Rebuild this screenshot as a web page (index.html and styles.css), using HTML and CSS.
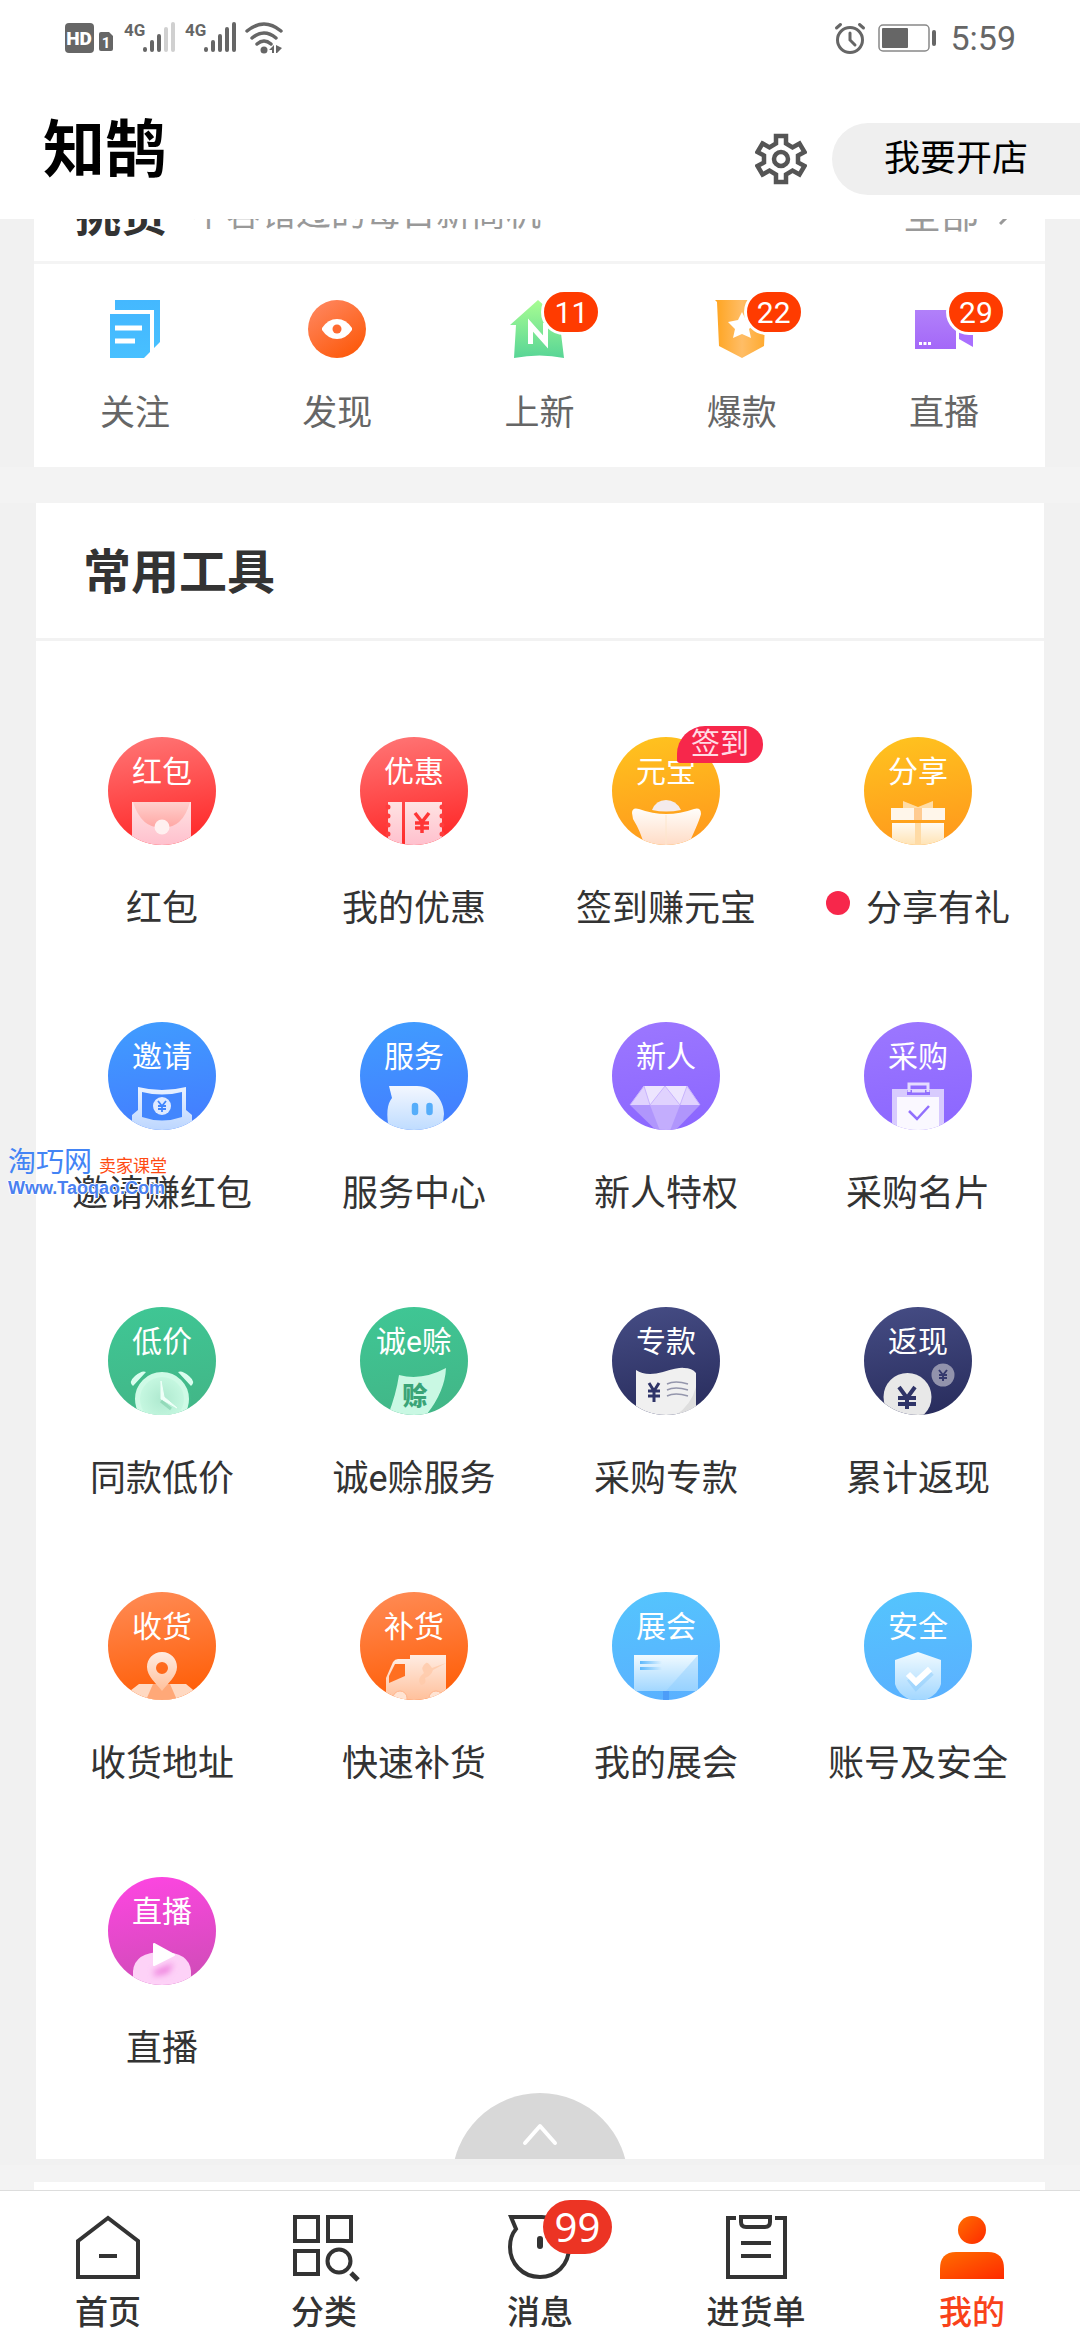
FILE: index.html
```html
<!DOCTYPE html>
<html lang="zh-CN">
<head>
<meta charset="utf-8">
<meta name="viewport" content="width=device-width, initial-scale=1">
<title>知鹄</title>
<link rel="stylesheet" href="styles.css">
</head>
<body>
<div class="page">
  <header class="top">
    <div class="status">
      <svg class="status-left" viewBox="0 0 222 34" width="222" height="34" aria-hidden="true">
        <rect x="1" y="2" width="29" height="30" rx="4" fill="#666"/>
        <text x="15" y="24" font-size="19" font-weight="900" fill="#fff" text-anchor="middle">HD</text>
        <path d="M37 11h8l4 4v13q0 2-2 2H37q-2 0-2-2V13q0-2 2-2z" fill="#666"/>
        <text x="42" y="27" font-size="15" font-weight="700" fill="#fff" text-anchor="middle">1</text>
        <g fill="#666">
          <text x="60" y="15" font-size="17" font-weight="700">4G</text>
          <text x="121" y="15" font-size="17" font-weight="700">4G</text>
        </g>
        <g stroke="#666" stroke-width="4" stroke-linecap="round">
          <path d="M81 28v1M88 21v8M95 15v14M142 28v1M149 21v8M156 15v14M163 8v21M170 3v26"/>
          <path d="M102 8v21M109 3v26" stroke="#d0d0d0"/>
        </g>
        <g fill="none" stroke="#666" stroke-width="3.500" stroke-linecap="round">
          <path d="M183 10q17-14 34 0M188 17q12-10 24 0M193 23q7-6 14 0"/>
        </g>
        <circle cx="200" cy="29" r="3.500" fill="#666"/>
        <path d="M205 29l5-5v8h-2v-3zM212 24v8h1l5-5z" fill="#666"/>
      </svg>
      <div class="status-right">
        <svg viewBox="0 0 32 32" width="32" height="32" fill="none" stroke="#666" stroke-linecap="round" aria-hidden="true">
          <circle cx="16" cy="18" r="12.500" stroke-width="3"/>
          <path d="M16 11v7l5 5" stroke-width="3"/><path d="M2.500 6L6.500 2.500M25.500 2.500l4 3.500" stroke-width="3"/>
        </svg>
        <svg viewBox="0 0 60 30" width="60" height="30" aria-hidden="true">
          <rect x="1" y="2" width="50" height="26" rx="4" fill="none" stroke="#888" stroke-width="1.500"/>
          <rect x="4" y="5" width="26" height="20" rx="1" fill="#666"/>
          <rect x="54" y="7" width="4" height="16" rx="2" fill="#666"/>
        </svg>
        <time class="clock">5:59</time>
      </div>
    </div>
    <div class="titlebar">
      <h1>知鹄</h1>
      <div class="actions">
        <button class="gear" type="button" aria-label="设置">
          <svg viewBox="0 0 52 52" width="52" height="52" fill="none" stroke="#555" stroke-width="4.500">
            <path d="M21 3H31V10.500L37.500 14.500L44.500 10.500L49.500 19L43 22.500V29.500L49.500 33L44.500 41.500L37.500 37.500L31 41.500V49H21V41.500L14.500 37.500L7.500 41.500L2.500 33L9 29.500V22.500L2.500 19L7.500 10.500L14.500 14.500L21 10.500Z"/>
            <circle cx="26" cy="26" r="7"/>
          </svg>
        </button>
        <button class="open-shop" type="button">我要开店</button>
      </div>
    </div>
  </header>

  <main class="content">
    <div class="band">
      <section class="card picks">
        <div class="picks-head">
          <h2>挑货</h2>
          <p>不容错过的每日新商机</p>
          <a href="#all">全部<svg viewBox="0 0 12 24" width="12" height="24" fill="none" stroke="#999" stroke-width="3"><path d="M1 3l9 9-9 9"/></svg></a>
        </div>
        <nav class="picks-grid">
          <a href="#follow">
            <span class="pick-icon"><svg viewBox="0 0 58 58" width="58" height="58">
              <defs><linearGradient id="gBlue" x1="0" y1="0" x2="0" y2="1"><stop offset="0" stop-color="#44b8ff"/><stop offset="1" stop-color="#48c0ff"/></linearGradient></defs>
              <path d="M9 0H54V42L48 48V10H9Z" fill="url(#gBlue)"/><path d="M4 14H44V52L38 58H4Z" fill="url(#gBlue)"/>
              <path d="M9 28H36M9 41H29" stroke="#fff" stroke-width="5"/></svg></span>
            <span>关注</span>
          </a>
          <a href="#discover">
            <span class="pick-icon"><svg viewBox="0 0 58 58" width="58" height="58">
              <defs><linearGradient id="gCoral" x1="0" y1="0" x2=".7" y2="1"><stop offset="0" stop-color="#ff8a66"/><stop offset="1" stop-color="#fd5a0c"/></linearGradient></defs>
              <circle cx="29" cy="29" r="29" fill="url(#gCoral)"/>
              <path d="M14 28Q20 19 29 19T44 28V30Q38 39 29 39T14 30Z" fill="#fff"/><circle cx="29" cy="29" r="4.500" fill="#ff6a30"/></svg></span>
            <span>发现</span>
          </a>
          <a href="#new">
            <span class="pick-icon"><svg viewBox="0 0 58 58" width="58" height="58">
              <defs><linearGradient id="gGreen" x1="0" y1="0" x2="0" y2="1"><stop offset="0" stop-color="#a8fd92"/><stop offset="1" stop-color="#58d596"/></linearGradient></defs>
              <path d="M28 0L56 25H50L54 58Q30 53 4 58L6 25H0Z" fill="url(#gGreen)"/>
              <path d="M20.500 44V25L35.500 42V23" stroke="#fff" stroke-width="5" fill="none"/></svg><b class="badge">11</b></span>
            <span>上新</span>
          </a>
          <a href="#hot">
            <span class="pick-icon"><svg viewBox="0 0 58 58" width="58" height="58">
              <defs><linearGradient id="gAmber" x1="0" y1="0" x2="1" y2="0"><stop offset="0" stop-color="#ffa41f"/><stop offset=".5" stop-color="#ffbd66"/><stop offset="1" stop-color="#ffa726"/></linearGradient></defs>
              <path d="M2 0H56L53 3L51 46L29 58L6 46L4 2Z" fill="url(#gAmber)"/>
              <path d="M29 12L33 20L43 22L36 29L38 38L29 34L20 38L22 29L15 22L25 20Z" fill="#fff"/></svg><b class="badge">22</b></span>
            <span>爆款</span>
          </a>
          <a href="#live">
            <span class="pick-icon"><svg viewBox="0 0 58 58" width="58" height="58">
              <defs><linearGradient id="gViolet" x1="0" y1="0" x2="0" y2="1"><stop offset="0" stop-color="#b180fa"/><stop offset="1" stop-color="#a468f8"/></linearGradient></defs>
              <path d="M0 10H41V49H0Z" fill="url(#gViolet)"/><path d="M44 20L58 12V47L44 39Z" fill="#a96fff"/>
              <path d="M4 43.500H16" stroke="#fff" stroke-width="3" stroke-dasharray="3 1.500"/></svg><b class="badge">29</b></span>
            <span>直播</span>
          </a>
        </nav>
      </section>
    </div>

    <section class="card tools">
      <h2 class="tools-head">常用工具</h2>
      <div class="tools-grid">
        <a class="tool" href="#hongbao"><span class="disc-wrap"><svg class="disc red" viewBox="0 0 108 108">
          <defs><linearGradient id="pk" x1="0" y1="0" x2="0" y2="1"><stop offset="0" stop-color="#ffe3e3"/><stop offset="1" stop-color="#ffc0cd"/></linearGradient>
          <linearGradient id="pk2" x1="0" y1="0" x2="0" y2="1"><stop offset="0" stop-color="#ffd0cd"/><stop offset="1" stop-color="#ffa6a3"/></linearGradient></defs>
          <path d="M24 65H83V108H24Z" fill="url(#pk)"/><path d="M25 65H82Q75 91 54 91T25 65Z" fill="url(#pk2)"/><circle cx="54" cy="90" r="7.500" fill="#fff0f0"/>
          <text class="disc-text" x="54" y="45">红包</text></svg></span><span class="tool-name">红包</span></a>
        <a class="tool" href="#coupon"><span class="disc-wrap"><svg class="disc red" viewBox="0 0 108 108">
          <path d="M28 65H42V108H28Z M45 65H82V108H45Z" fill="url(#pk)"/>
          <path d="M28 70V108M82 70V108" stroke="#ff3d3d" stroke-width="5" stroke-linecap="round" stroke-dasharray="0 9"/>
          <path d="M55 76l7 9 7-9M62 85v11M55 86h14M55 91h14" fill="none" stroke="#ff3636" stroke-width="3.500"/>
          <text class="disc-text" x="54" y="45">优惠</text></svg></span><span class="tool-name">我的优惠</span></a>
        <a class="tool" href="#checkin"><span class="disc-wrap"><svg class="disc gold" viewBox="0 0 108 108">
          <defs><linearGradient id="cr" x1="0" y1="0" x2="0" y2="1"><stop offset="0" stop-color="#fffdfa"/><stop offset="1" stop-color="#ffdcc6"/></linearGradient></defs>
          <path d="M40 73Q44 63 54 63T69 73Q54 76 40 73Z" fill="#f4ebeb"/>
          <path d="M20 76Q20 70 27 72Q54 82 82 72Q89 70 89 77Q87 85 77 106V108H32Q29 95 21 82Z" fill="url(#cr)"/><path d="M54 78V108" stroke="#fde6cc" stroke-width="1"/>
          <text class="disc-text" x="54" y="45">元宝</text></svg><b class="sign-tag">签到</b></span><span class="tool-name">签到赚元宝</span></a>
        <a class="tool" href="#share"><span class="disc-wrap"><svg class="disc gold" viewBox="0 0 108 108">
          <defs><linearGradient id="gf" x1="0" y1="0" x2="0" y2="1"><stop offset="0" stop-color="#fffaf2"/><stop offset="1" stop-color="#ffe3b4"/></linearGradient></defs>
          <path d="M39 64L54 70L69 64V71H39Z" fill="#ffdca6"/><path d="M27 71H81V83H27Z" fill="#fff6ea"/><path d="M28 86H80V108H28Z" fill="url(#gf)"/>
          <path d="M50 71H58V83H50Z" fill="#ffcb91"/><path d="M51 86H57V108H51Z" fill="#ffdba5"/>
          <text class="disc-text" x="54" y="45">分享</text></svg></span><span class="tool-name"><i class="dot"></i>分享有礼</span></a>

        <a class="tool" href="#invite"><span class="disc-wrap"><svg class="disc blue" viewBox="0 0 108 108">
          <defs><linearGradient id="bl" x1="0" y1="0" x2="0" y2="1"><stop offset="0" stop-color="#eaf2ff"/><stop offset="1" stop-color="#bcd6ff"/></linearGradient></defs>
          <path d="M24 93L30 88V65Q54 71 78 65V88L84 93V108H24Z" fill="url(#bl)"/><path d="M34 70Q54 75 74 70V95Q54 102 34 95Z" fill="#4286fd"/>
          <circle cx="54" cy="84" r="9" fill="#dfeaff"/><path d="M50 79l4 5 4-5M54 84v6M50 84h8M50 87h8" stroke="#4286fd" stroke-width="1.800" fill="none"/>
          <text class="disc-text" x="54" y="45">邀请</text></svg></span><span class="tool-name">邀请赚红包</span></a>
        <a class="tool" href="#service"><span class="disc-wrap"><svg class="disc blue" viewBox="0 0 108 108">
          <defs><linearGradient id="bl2" x1="0" y1="0" x2="0" y2="1"><stop offset="0" stop-color="#f3f7ff"/><stop offset="1" stop-color="#bfdcff"/></linearGradient></defs>
          <path d="M29 64H57C74 64 84 79 84 92L82 108H29C26 92 27 82 32 76Z" fill="url(#bl2)"/><path d="M55 84V90M69.500 84V90" stroke="#55adfa" stroke-width="6.500" stroke-linecap="round"/>
          <text class="disc-text" x="54" y="45">服务</text></svg></span><span class="tool-name">服务中心</span></a>
        <a class="tool" href="#newbie"><span class="disc-wrap"><svg class="disc purple" viewBox="0 0 108 108">
          <path d="M32 64H75L88 83H18Z" fill="#e0d2fe"/><path d="M18 83H88L54 118Z" fill="#b096fc"/>
          <path d="M32 64H53L38 83Z M53 64H75L68 83Z" fill="#ede5fe"/><path d="M38 83H68L56 114H50Z" fill="#c3adfd"/><path d="M18 83L32 64L38 83L53 64L68 83L75 64L88 83" fill="none" stroke="#c8b4fd" stroke-width="1"/>
          <text class="disc-text" x="54" y="45">新人</text></svg></span><span class="tool-name">新人特权</span></a>
        <a class="tool" href="#card"><span class="disc-wrap"><svg class="disc purple" viewBox="0 0 108 108">
          <path d="M28 67H80V108H28Z" fill="#d8cbfe"/><path d="M33 75H75V108H33Z" fill="#faf8ff"/><path d="M43 68H66V73H43Z" fill="#9270fd"/><path d="M45 70V62H64V70" fill="none" stroke="#e5dcff" stroke-width="3"/><path d="M48 69H61" stroke="#e5dcff" stroke-width="3"/>
          <path d="M45 89L53 97L65 84" fill="none" stroke="#9270fd" stroke-width="2.500"/>
          <text class="disc-text" x="54" y="45">采购</text></svg></span><span class="tool-name">采购名片</span></a>

        <a class="tool" href="#lowprice"><span class="disc-wrap"><svg class="disc green" viewBox="0 0 108 108">
          <defs><radialGradient id="ck"><stop offset="0" stop-color="#aee9cf"/><stop offset="1" stop-color="#c5f7e0"/></radialGradient></defs>
          <path d="M25 79Q20 75 27 69T38 65Z M83 79Q88 75 81 69T70 65Z" fill="#d9fdee"/>
          <circle cx="54" cy="92" r="28" fill="#cffae6" stroke="#42bb8b" stroke-width="2"/><circle cx="54" cy="92" r="22" fill="url(#ck)"/>
          <path d="M53 92V74L56 90L69 101Z" fill="#effff8" stroke="#effff8"/><path d="M53 94l10 8" stroke="#72c7a0" stroke-width="3" opacity=".5"/>
          <text class="disc-text" x="54" y="45">低价</text></svg></span><span class="tool-name">同款低价</span></a>
        <a class="tool" href="#credit"><span class="disc-wrap"><svg class="disc green" viewBox="0 0 108 108">
          <path d="M39 68Q62 74 86 61Q85 84 67 107L60 108H28Q36 88 39 68Z" fill="#c9f8e3"/><text x="55" y="98" font-size="25" font-weight="900" fill="#3aa477" text-anchor="middle">赊</text>
          <text class="disc-text" x="54" y="45">诚e赊</text></svg></span><span class="tool-name">诚e赊服务</span></a>
        <a class="tool" href="#fund"><span class="disc-wrap"><svg class="disc navy" viewBox="0 0 108 108">
          <path d="M24 63Q34 70 51 65T72 61Q80 61 84 66V108H24Z" fill="#f0f0f0"/><path d="M84 80V108H64Q79 98 84 80Z" fill="#dedede"/>
          <path d="M37 76l5 8 5-8M42 84v11M36 84h12M36 89h12" stroke="#2f3468" stroke-width="3" fill="none"/><path d="M55 77q8-4 21 0M55 83q8-4 21 0M55 89q8-4 21 0" stroke="#9496ac" stroke-width="1.500" fill="none"/>
          <text class="disc-text" x="54" y="45">专款</text></svg></span><span class="tool-name">采购专款</span></a>
        <a class="tool" href="#cashback"><span class="disc-wrap"><svg class="disc navy" viewBox="0 0 108 108">
          <circle cx="79" cy="68" r="11.500" fill="#9293ac"/><circle cx="43.500" cy="90" r="24" fill="#e8e8e8"/>
          <path d="M35 80l8 11 8-11M43 91v11M34 91h18M34 97h18" stroke="#2f3468" stroke-width="4" fill="none"/><path d="M75 63l4 5 4-5M79 68v6M75 68h8M75 71h8" stroke="#363a6e" stroke-width="2" fill="none"/>
          <text class="disc-text" x="54" y="45">返现</text></svg></span><span class="tool-name">累计返现</span></a>

        <a class="tool" href="#address"><span class="disc-wrap"><svg class="disc orange" viewBox="0 0 108 108">
          <defs><linearGradient id="or" x1="0" y1="0" x2="0" y2="1"><stop offset="0" stop-color="#ffece2"/><stop offset="1" stop-color="#ffc09b"/></linearGradient></defs>
          <path d="M31 92H78L90 102V108H18V102Z" fill="#ffd9c2"/><path d="M45 92H62L69 108H38Z" fill="#ffa878"/>
          <path fill-rule="evenodd" d="M54 60C63 60 69 67 69 75C69 84 60 91 54 99C48 91 39 84 39 75C39 67 45 60 54 60ZM54 70A6 6 0 1 0 54 82A6 6 0 1 0 54 70Z" fill="url(#or)"/>
          <text class="disc-text" x="54" y="45">收货</text></svg></span><span class="tool-name">收货地址</span></a>
        <a class="tool" href="#restock"><span class="disc-wrap"><svg class="disc orange" viewBox="0 0 108 108">
          <path d="M26 108V86L33 70Q35 67 38 67H50V108Z" fill="url(#or)"/><path d="M29 91V84L35 72H45V84Z" fill="#ff6f20"/><path d="M50 63H86V108H50Z" fill="url(#or)"/>
          <path d="M86 71L72 76Q68 70 66 71Q60 75 64 81Q56 87 61 93Q67 92 65 86Q71 84 73 78Z" fill="#ffc9a9" opacity=".8"/>
          <circle cx="40" cy="106" r="7" fill="#ffe4d4" stroke="#ffb48b"/><circle cx="76" cy="106" r="7" fill="#ffe4d4" stroke="#ffb48b"/>
          <text class="disc-text" x="54" y="45">补货</text></svg></span><span class="tool-name">快速补货</span></a>
        <a class="tool" href="#expo"><span class="disc-wrap"><svg class="disc sky" viewBox="0 0 108 108">
          <defs><linearGradient id="sk" x1="0" y1="0" x2="0" y2="1"><stop offset="0" stop-color="#f0faff"/><stop offset="1" stop-color="#a2d7ff"/></linearGradient>
          <linearGradient id="ln" x1="0" y1="0" x2="1" y2="0"><stop offset="0" stop-color="#5eb8fb"/><stop offset="1" stop-color="#5eb8fb" stop-opacity="0"/></linearGradient></defs>
          <path d="M51 99H57V108H51Z" fill="#4d9df8"/><path d="M22 63H86V99H22Z" fill="url(#sk)"/><path d="M86 63V99H54Z" fill="#88caff" opacity=".4"/><path d="M28 69H50V72H28ZM28 75H50V78H28Z" fill="url(#ln)"/>
          <text class="disc-text" x="54" y="45">展会</text></svg></span><span class="tool-name">我的展会</span></a>
        <a class="tool" href="#security"><span class="disc-wrap"><svg class="disc sky" viewBox="0 0 108 108">
          <path d="M54 60L77 68V92Q75 101 62 108H46Q33 101 31 92V68Z" fill="url(#sk)"/><path d="M45 87l7 9 16-15" fill="none" stroke="#7fc5fb" stroke-width="5" opacity=".4"/><path d="M44 82L52 90L66 77" fill="none" stroke="#fff" stroke-width="6"/>
          <text class="disc-text" x="54" y="45">安全</text></svg></span><span class="tool-name">账号及安全</span></a>

        <a class="tool" href="#live2"><span class="disc-wrap"><svg class="disc magenta" viewBox="0 0 108 108">
          <defs><filter id="soft" x="-50%" y="-50%" width="200%" height="200%"><feGaussianBlur stdDeviation="3"/></filter></defs>
          <path d="M25 108V94Q27 75 54 75T83 94V108Z" fill="#fdd2f7"/><path d="M46 94L66 86L60 96L46 99Z" fill="#ed7bdc" filter="url(#soft)"/>
          <path d="M46 67L66 78L46 88Z" fill="#fff" stroke="#fff" stroke-width="2" stroke-linejoin="round"/>
          <text class="disc-text" x="54" y="45">直播</text></svg></span><span class="tool-name">直播</span></a>
      </div>
      <button class="collapse" type="button" aria-label="收起">
        <svg viewBox="0 0 176 66" width="176" height="66"><circle cx="88" cy="88" r="88" fill="#d8d8d8"/><path d="M73 50L88 33L103 50" fill="none" stroke="#fff" stroke-width="4" stroke-linecap="round" stroke-linejoin="round"/></svg>
      </button>
    </section>
    <div class="next-band"><section class="card"></section></div>

    <a class="watermark" href="#taoqao">
      <span class="wm-top"><span>淘巧网</span><em>卖家课堂</em></span>
      <b>Www.Taoqao.Com</b>
    </a>
  </main>

  <nav class="tabs">
    <a href="#home"><span class="tab-icon"><svg viewBox="0 0 64 64" width="64" height="64" fill="none" stroke="#333" stroke-width="4">
      <path d="M2 26L32 3L62 26V62H2Z"/><path d="M23 41H41"/></svg></span><span>首页</span></a>
    <a href="#category"><span class="tab-icon"><svg viewBox="0 0 64 64" width="64" height="64" fill="none" stroke="#333" stroke-width="4" overflow="visible">
      <path d="M3 2H26V26H3ZM36 2H59V26H36ZM3 36H26V59H3Z"/><circle cx="47" cy="46" r="11.500"/><path d="M59 58L66 65" stroke-width="5"/></svg></span><span>分类</span></a>
    <a href="#message"><span class="tab-icon"><svg viewBox="0 0 64 64" width="64" height="64" fill="none" stroke="#333" stroke-width="4">
      <path d="M3 2H34C52 2 61 17 61 32C61 50 48 62 32 62C14 62 2 48 2 32Q2 21 8 14Z"/><path d="M32 24V31" stroke-width="6" stroke-linecap="round"/></svg><b class="tab-badge">99</b></span><span>消息</span></a>
    <a href="#orders"><span class="tab-icon"><svg viewBox="0 0 64 64" width="64" height="64" fill="none" stroke="#333" stroke-width="4">
      <path d="M12 3H4V62H61V3H51"/><path d="M17 2H46V7Q46 12 41 12H22Q17 12 17 7Z"/><path d="M17 28H47M17 41H47"/></svg></span><span>进货单</span></a>
    <a class="active" href="#mine" aria-current="page"><span class="tab-icon"><svg viewBox="0 0 64 64" width="64" height="64">
      <defs><linearGradient id="me" x1="0" y1="0" x2="1" y2="1"><stop offset="0" stop-color="#ff6e00"/><stop offset="1" stop-color="#ff2a00"/></linearGradient></defs>
      <circle cx="32" cy="15" r="14" fill="url(#me)"/><path d="M0 64V54Q0 37 16 37H48Q64 37 64 54V64Z" fill="url(#me)"/></svg></span><span>我的</span></a>
  </nav>
</div>
</body>
</html>
```
FILE: styles.css
```css
* { box-sizing: border-box; }

body {
  margin: 0;
  background: #f1f1f1;
  color: #333;
  font-family: Roboto, "Noto Sans CJK SC", sans-serif;
  font-size: 36px;
  line-height: 46px;
}

h1, h2, p { margin: 0; }
a { color: inherit; text-decoration: none; }
svg { display: block; flex: none; }
button {
  border: 0;
  padding: 0;
  background: none;
  color: inherit;
  font: inherit;
}

.page {
  display: flex;
  flex-direction: column;
  min-height: 100vh;
}

/* Status bar and title */
.top { background: #fff; }
.status {
  display: flex;
  justify-content: space-between;
  align-items: center;
  height: 75px;
  padding: 0 64px;
}
.status-right { display: flex; align-items: center; gap: 12px; }
.clock { color: #666; font-size: 34px; }

.titlebar {
  display: flex;
  justify-content: space-between;
  align-items: flex-start;
  padding-left: 43px;
}
h1 {
  padding-top: 40px;
  color: #000;
  font-size: 62px;
  line-height: 72px;
}
.actions {
  display: flex;
  align-items: center;
  gap: 25px;
  padding: 48px 0 24px;
}
.open-shop {
  height: 72px;
  padding: 0 52px;
  border-radius: 36px 0 0 36px;
  background: #efefef;
  color: #000;
}

/* Cards */
.content {
  position: relative;
  display: flex;
  flex: 1;
  flex-direction: column;
}
.card { background: #fff; }
.band { border-bottom: 36px solid #f3f3f3; }
.picks { margin: 0 35px 0 34px; }
.picks-head {
  display: flex;
  align-items: flex-end;
  height: 45px;
  padding: 0 34px 16px 41px;
  border-bottom: 3px solid #f4f4f4;
  overflow: hidden;
}
.picks-head h2 { font-size: 46px; line-height: 60px; }
.picks-head p { margin-left: 24px; color: #999; font-size: 35px; line-height: 60px; }
.picks-head a {
  display: flex;
  align-items: center;
  gap: 20px;
  margin-left: auto;
  color: #999;
  font-size: 38px;
  line-height: 60px;
}
.picks-grid {
  display: grid;
  grid-template-columns: repeat(5, 1fr);
  padding: 36px 0 30px;
}
.picks-grid a {
  display: flex;
  flex-direction: column;
  align-items: center;
  gap: 33px;
  color: #666;
  font-size: 35px;
}
.pick-icon { position: relative; }
.badge {
  position: absolute;
  left: 31px;
  top: -11px;
  min-width: 60px;
  height: 46px;
  border: 3px solid #fff;
  border-radius: 23px;
  background: #ff3b00;
  color: #fff;
  font-size: 30px;
  font-weight: 400;
  line-height: 42px;
  text-align: center;
}

.tools { margin: 0 36px; }
.tools-head {
  height: 138px;
  padding-left: 47px;
  border-bottom: 3px solid #f2f2f2;
  font-size: 48px;
  line-height: 140px;
}
.tools-grid {
  display: grid;
  grid-template-columns: repeat(4, 1fr);
  row-gap: 90px;
  padding: 96px 0 21px;
}
.tool {
  display: flex;
  flex-direction: column;
  align-items: center;
  gap: 41px;
}
.tool-name { display: flex; gap: 16px; }
.disc-wrap { position: relative; }
.disc {
  width: 108px;
  height: 108px;
  border-radius: 50%;
  overflow: hidden;
}
.disc-text {
  fill: #fff;
  font-size: 30px;
  text-anchor: middle;
}
.red { background: linear-gradient(170deg, #ff7777, #ff2222); }
.gold { background: linear-gradient(170deg, #ffc41f, #ff961c); }
.blue { background: linear-gradient(170deg, #409dff, #447bff); }
.purple { background: linear-gradient(170deg, #9c77ff, #8b66ff); }
.green { background: linear-gradient(170deg, #3fc795, #42b586); }
.navy { background: linear-gradient(170deg, #464d85, #272b5b); }
.orange { background: linear-gradient(170deg, #ff8c57, #ff5a00); }
.sky { background: linear-gradient(170deg, #54c5fd, #5aafff); }
.magenta { background: linear-gradient(170deg, #ff45e3, #cc4db4); }

.sign-tag {
  position: absolute;
  left: 65px;
  top: -11px;
  width: 86px;
  height: 37px;
  border-radius: 28px 18px 18px 3px;
  background: #f7274b;
  color: #ffdbe4;
  font-size: 29px;
  font-weight: 400;
  line-height: 36px;
  text-align: center;
}
.dot {
  width: 24px;
  height: 24px;
  margin-top: 5px;
  border-radius: 50%;
  background: #f7274b;
}
.collapse { display: block; margin: 0 auto; }

.next-band {
  display: flex;
  flex: 1;
  min-height: 25px;
  padding: 17px 35px 0 34px;
  margin-top: 6px;
  background: #f3f3f3;
}
.next-band .card { flex: 1; }

.watermark {
  position: absolute;
  left: 8px;
  top: 930px;
  display: flex;
  flex-direction: column;
}
.wm-top {
  display: flex;
  align-items: baseline;
  gap: 7px;
  color: #4384f5;
  font-size: 28px;
  line-height: 28px;
}
.wm-top em { color: #ff4a12; font-size: 17px; font-style: normal; }
.watermark b {
  color: #4a80f0;
  font-family: "Liberation Sans", sans-serif;
  font-size: 18px;
  line-height: 16px;
  text-shadow: 1px 0 #fff, -1px 0 #fff, 0 1px #fff, 0 -1px #fff;
}

/* Bottom tab bar */
.tabs {
  display: grid;
  grid-template-columns: repeat(5, 1fr);
  padding: 24px 0 4px;
  border-top: 1px solid #ddd;
  background: #fff;
}
.tabs a {
  display: flex;
  flex-direction: column;
  align-items: center;
  gap: 11px;
  font-size: 33px;
  font-weight: 500;
}
.tabs .active { color: #f9421a; }
.tab-icon { position: relative; }
.tab-badge {
  position: absolute;
  left: 35px;
  top: -15px;
  min-width: 69px;
  height: 54px;
  border-radius: 27px;
  background: #ec3424;
  color: #fff;
  font-family: "Noto Sans", sans-serif;
  font-size: 40px;
  font-weight: 400;
  line-height: 54px;
  text-align: center;
}
```
